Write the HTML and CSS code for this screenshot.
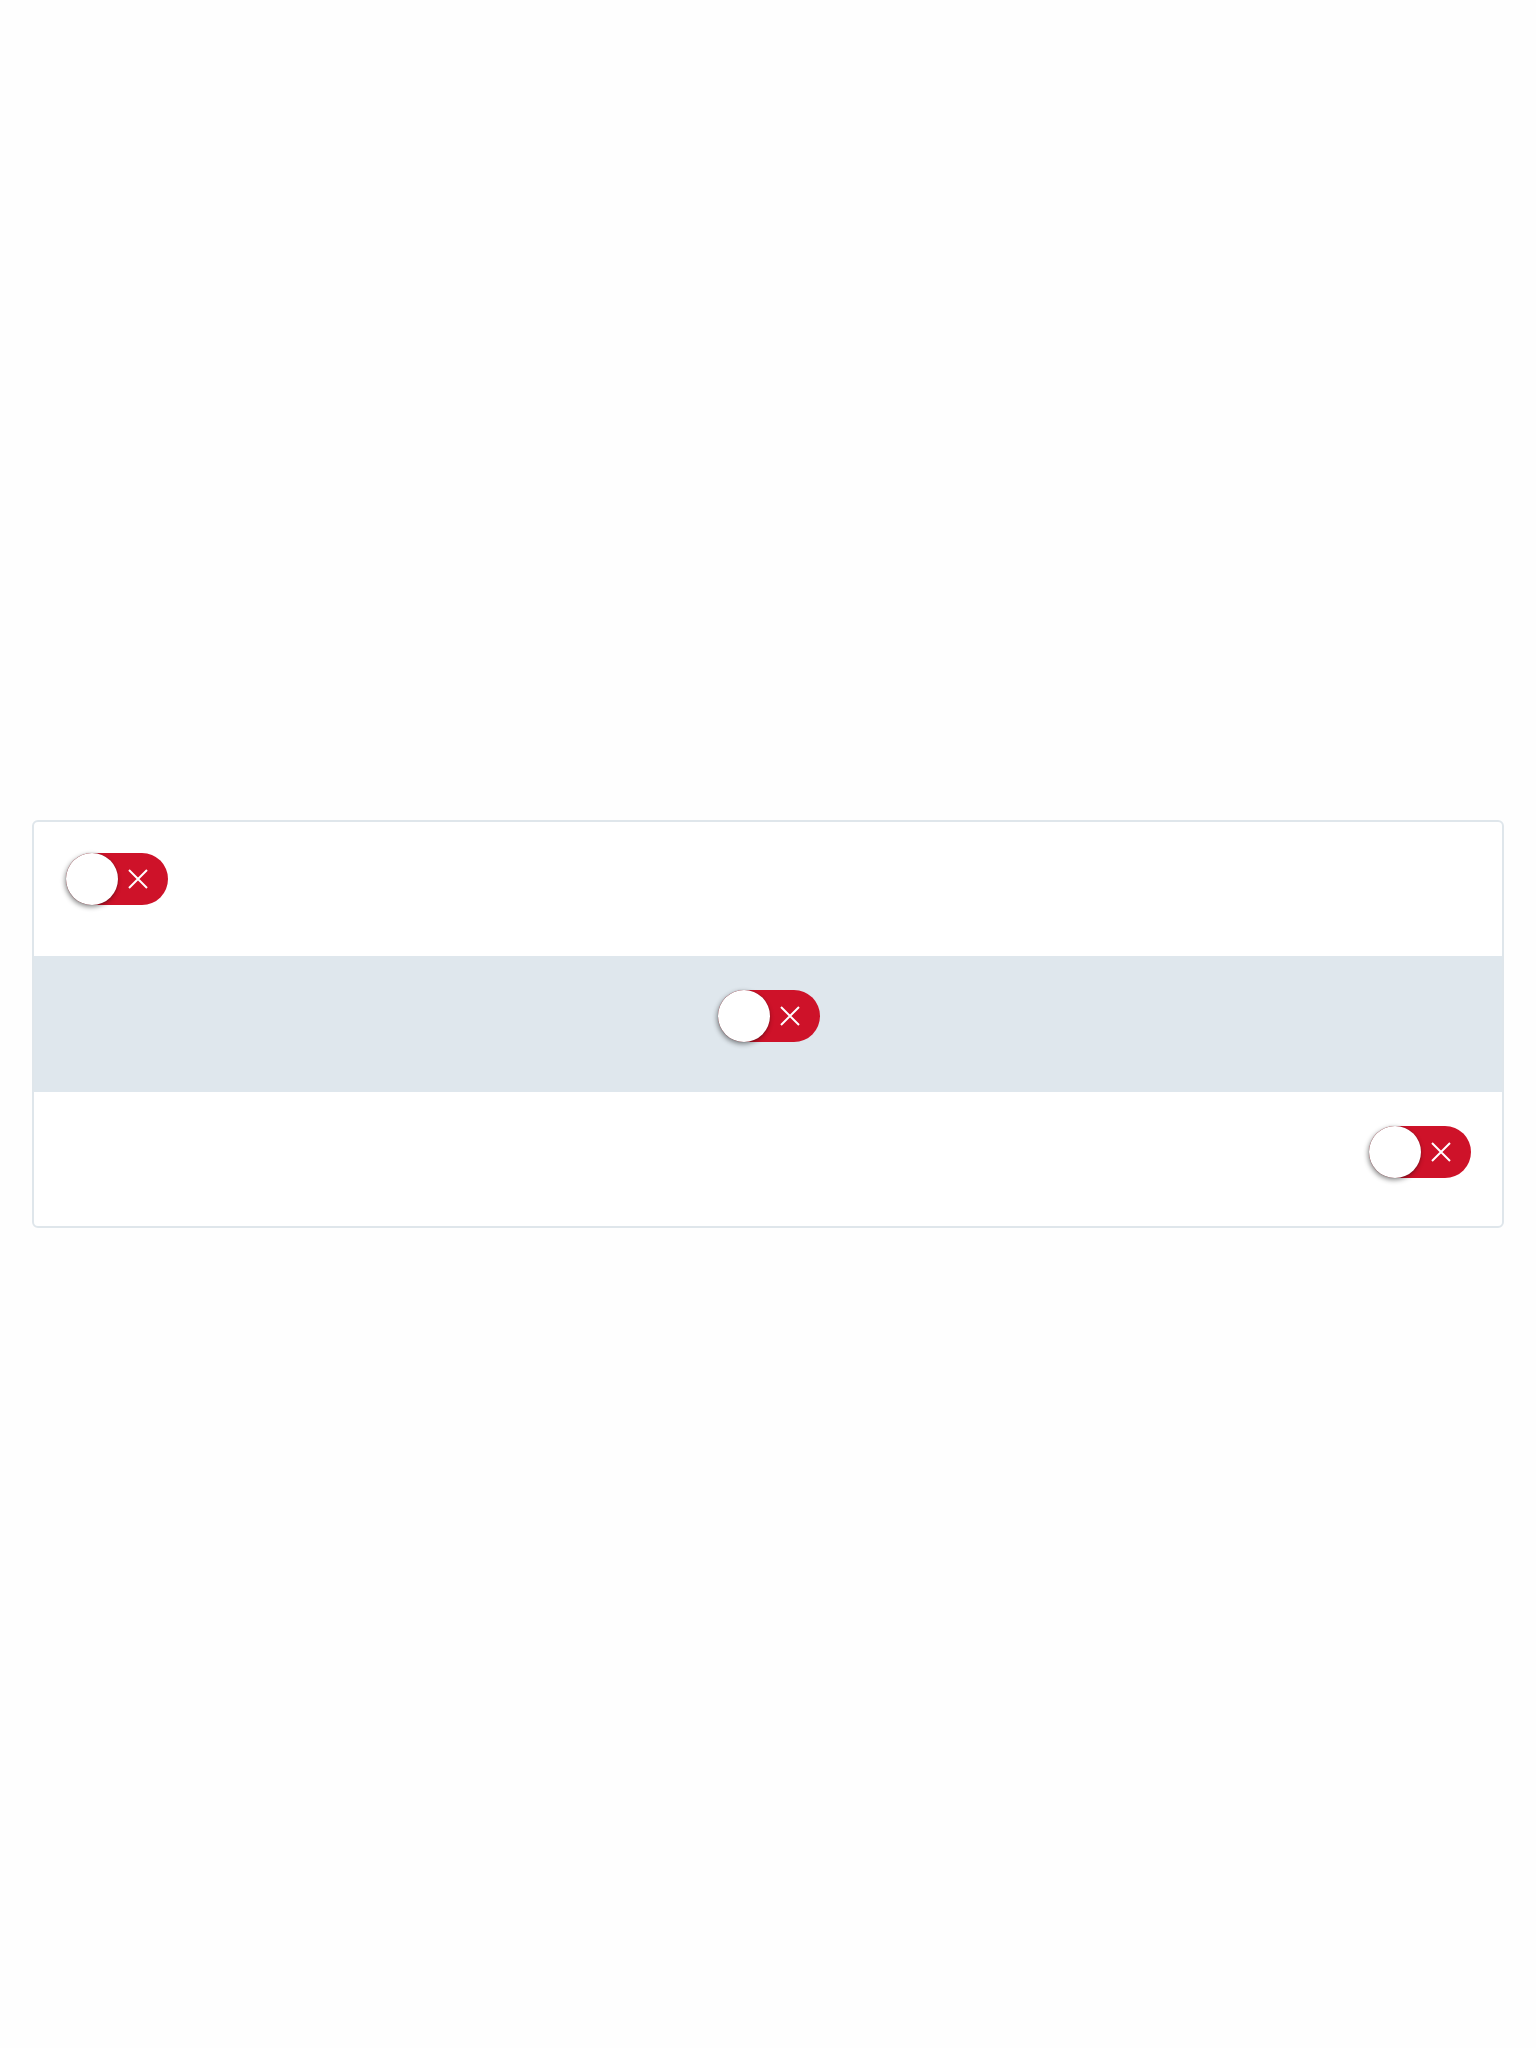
FILE: index.html
```html
<!DOCTYPE html>
<html>
<head>
<meta charset="utf-8">
<link rel="stylesheet" href="styles.css">
</head>
<body>
<div class="page">
  <div class="card">
    <div class="row row-first row-start">
      <span class="toggle"><span class="knob"></span><svg class="x" viewBox="0 0 22 22"><path d="M2 2L20 20M20 2L2 20"/></svg></span>
    </div>
    <div class="row row-center striped">
      <span class="toggle"><span class="knob"></span><svg class="x" viewBox="0 0 22 22"><path d="M2 2L20 20M20 2L2 20"/></svg></span>
    </div>
    <div class="row row-last row-end">
      <span class="toggle"><span class="knob"></span><svg class="x" viewBox="0 0 22 22"><path d="M2 2L20 20M20 2L2 20"/></svg></span>
    </div>
  </div>
</div>
</body>
</html>
```
FILE: styles.css
```css
html, body {
  margin: 0;
  padding: 0;
  background: #fefefe;
  font-family: "Liberation Sans", Arial, sans-serif;
}
.page {
  padding: 820px 32px 0 32px;
}
.card {
  border: 2px solid #dfe6eb;
  border-radius: 6px;
  background: #fff;
  overflow: hidden;
  width: 1468px;
}
.row {
  height: 136px;
  box-sizing: border-box;
  padding: 34px 31px 0 32px;
  display: flex;
}
.row-first {
  height: 134px;
  padding-top: 31px;
}
.row-last {
  height: 134px;
}
.row-start { justify-content: flex-start; }
.row-center { justify-content: center; }
.row-end { justify-content: flex-end; }
.striped {
  background: #dfe7ed;
  margin: 0 -2px;
  padding-left: 34px;
  padding-right: 33px;
}
.toggle {
  position: relative;
  display: block;
  width: 102px;
  height: 52px;
  border-radius: 26px;
  background: #ce1229;
}
.knob {
  position: absolute;
  left: 0;
  top: 0;
  width: 52px;
  height: 52px;
  border-radius: 50%;
  background: #fff;
  box-shadow: -1px 2px 5px rgba(0, 0, 0, 0.45), 0 0 1px rgba(0, 0, 0, 0.4);
}
.x {
  position: absolute;
  left: 61px;
  top: 15px;
  width: 22px;
  height: 22px;
  fill: none;
  stroke: #fff;
  stroke-width: 2;
}
```
